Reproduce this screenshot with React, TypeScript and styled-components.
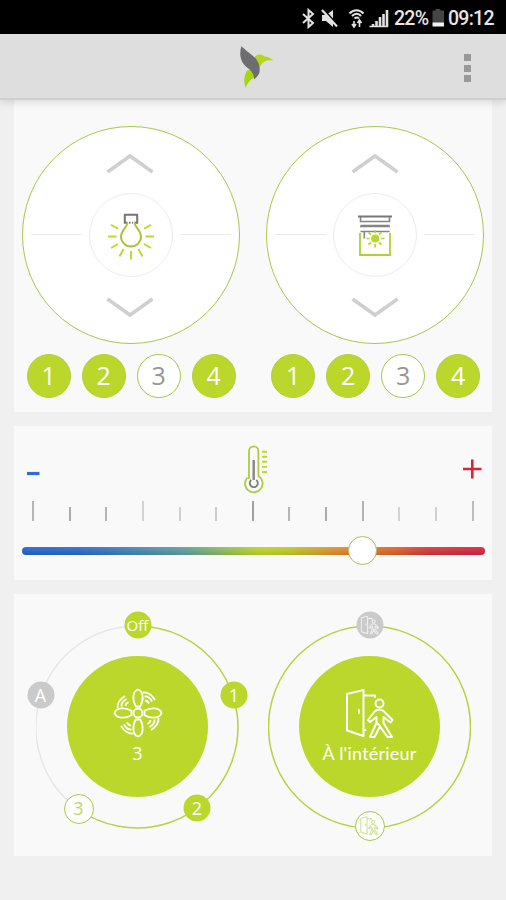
import React from "react";
import styled, { createGlobalStyle } from "styled-components";

const LIME = "#bcd72b";
const EDGE = "#a9c64c";

const GlobalStyle = createGlobalStyle`
  * { box-sizing: border-box; }
  body { margin: 0; background: #f0f0f0; font-family: "Open Sans", "Noto Sans", sans-serif; }
`;

const Screen = styled.div`
  width: 506px;
  height: 900px;
  background: #f0f0f0;
  overflow: hidden;
  display: flex;
  flex-direction: column;
`;

const StatusBar = styled.div`
  height: 34px;
  flex: none;
  background: #000;
  color: #e6e6e6;
  display: flex;
  align-items: center;
  justify-content: flex-end;
  padding: 3px 10px 0 0;
  svg { display: block; flex: none; }
`;

const StatusText = styled.span<{ $w: number }>`
  width: ${(p) => p.$w}px;
  font: 500 19.5px/34px Roboto, sans-serif;
  letter-spacing: -0.75px;
  white-space: nowrap;
`;

const AppBar = styled.header`
  height: 66px;
  flex: none;
  background: #dedede;
  border-bottom: 2px solid #d0d0d0;
  box-shadow: 0 2px 8px rgba(0, 0, 0, 0.14);
  position: relative;
  z-index: 1;
  display: grid;
  grid-template-columns: 1fr 66px 1fr;
  svg { display: block; }
`;

const Menu = styled.button`
  border: 0;
  padding: 20px 0 0;
  background: none;
  justify-self: end;
  margin-right: 35px;
  width: 7px;
  display: flex;
  flex-direction: column;
  gap: 3.5px;
  i { width: 7px; height: 7px; background: #999; flex: none; }
`;

const Content = styled.main`
  padding: 0 14px;
  display: flex;
  flex-direction: column;
`;

const Panel = styled.section<{ $h: number; $gap: number }>`
  height: ${(p) => p.$h}px;
  margin-bottom: ${(p) => p.$gap}px;
  background: #f9f9f9;
`;

const DialPanel = styled(Panel)`
  display: flex;
  gap: 26px;
  padding: 25.5px 7.5px 0;
`;

const DialColumn = styled.div`
  width: 218.5px;
`;

const Dial = styled.div`
  width: 218px;
  height: 218px;
  border: 1.5px solid ${EDGE};
  border-radius: 50%;
  background: #fff;
  display: grid;
  grid-template-columns: 51px 84px 51px;
  grid-template-rows: 84px;
  gap: 0 7px;
  place-content: center;
  align-items: center;
  position: relative;
`;

const Divider = styled.span`
  height: 1.5px;
  background: #ebebeb;
`;

const DialCore = styled.div`
  width: 84px;
  height: 84px;
  border: 1.5px solid #ececec;
  border-radius: 50%;
  display: grid;
  place-items: center;
  svg { display: block; }
`;

const Arrow = styled.svg<{ $down?: boolean }>`
  position: absolute;
  left: 83.5px;
  ${(p) => (p.$down ? "bottom: 24px; transform: scaleY(-1);" : "top: 25px;")}
`;

const Presets = styled.div`
  display: flex;
  gap: 11px;
  margin: 10.5px 0 0 5.2px;
`;

const Preset = styled.button<{ $open?: boolean }>`
  width: 44px;
  height: 44px;
  flex: none;
  padding: 0;
  border-radius: 50%;
  border: 1.5px solid ${(p) => (p.$open ? EDGE : "#b5ce3c")};
  background: ${(p) => (p.$open ? "#fff" : LIME)};
  color: ${(p) => (p.$open ? "#969696" : "#fff")};
  font: 400 25px/38px "Open Sans", sans-serif;
  padding-bottom: 2px;
`;

const TempPanel = styled(Panel)`
  padding: 18px 7.5px 0;
`;

const TempHead = styled.div`
  display: flex;
  justify-content: space-between;
  padding: 0 3px 0 4px;
  height: 57px;
  svg { display: block; }
`;

const Scale = styled.div`
  height: 20px;
  padding: 0 11px 0 10.5px;
  display: flex;
  justify-content: space-between;
  align-items: flex-end;
`;

const Tick = styled.i<{ $major: boolean; $tone: string }>`
  width: 2px;
  height: ${(p) => (p.$major ? 20 : 14)}px;
  background: ${(p) => p.$tone};
`;

const Track = styled.div`
  margin-top: 26px;
  height: 7.5px;
  border-radius: 4px;
  background: linear-gradient(180deg, rgba(255,255,255,.12), rgba(0,0,0,.07)),
    linear-gradient(90deg, #1f5fd0 0%, #2668c8 13%, #5b9c9c 35%, #b8d420 51%, #bccb24 57%, #dc8a28 68%, #dc6224 80%, #d33138 88%, #d5203c 100%);
  display: flex;
  align-items: center;
  padding-left: 326px;
`;

const Thumb = styled.span`
  width: 29px;
  height: 29px;
  flex: none;
  border: 1.6px solid ${EDGE};
  border-radius: 50%;
  background: #fff;
`;

const ModePanel = styled(Panel)`
  display: flex;
  gap: 29px;
  padding: 31px 0 0 22px;
`;

const Ring = styled.div`
  position: relative;
  width: 203px;
  height: 204px;
  display: grid;
  place-items: center;
`;

const RingLine = styled.svg`
  position: absolute;
  inset: 0;
`;

const Hub = styled.div`
  width: 141px;
  height: 141px;
  border-radius: 50%;
  background: ${LIME};
  color: #fff;
  position: relative;
  display: flex;
  flex-direction: column;
  align-items: center;
  padding-top: 32px;
  svg { display: block; flex: none; }
`;

const HubLabel = styled.span<{ $spread?: boolean }>`
  font: 400 18px/22px ${(p) => (p.$spread ? "Lato" : '"Open Sans"')}, sans-serif;
  letter-spacing: ${(p) => (p.$spread ? "0.2px" : "0")};
  margin-top: 4px;
  white-space: nowrap;
`;

const Node = styled.button<{ $x: number; $y: number; $kind: "on" | "off" | "open"; $fs?: number }>`
  position: absolute;
  left: ${(p) => p.$x}px;
  top: ${(p) => p.$y}px;
  transform: translate(-50%, -50%);
  width: ${(p) => (p.$kind === "open" ? 30 : 27)}px;
  height: ${(p) => (p.$kind === "open" ? 30 : 27)}px;
  padding: 0;
  border-radius: 50%;
  border: ${(p) => (p.$kind === "open" ? `1.5px solid ${EDGE}` : "0")};
  background: ${(p) => ({ on: LIME, off: "#cacaca", open: "#fff" })[p.$kind]};
  color: ${(p) => (p.$kind === "open" ? "#bfd46a" : "#fff")};
  font: 400 ${(p) => p.$fs ?? 18}px/25px "Open Sans", sans-serif;
  display: grid;
  place-items: center;
  svg { display: block; }
`;

const StatusIcons = () => (
  <svg width="92" height="22" viewBox="0 0 92 22" fill="none" stroke="#e2e2e2">
    <path d="M1 6l10 9-4.500 4V2l4.500 4L1 15" strokeWidth="2" />
    <path d="M20 7h4l7-5v17l-7-6h-4z" fill="#e2e2e2" stroke="none" />
    <path d="M20 0l16 18" stroke="#000" strokeWidth="2.500" />
    <path d="M20 2l15 16.500" strokeWidth="2.200" />
    <path d="M47.500 5.500c4-4.500 10-4.500 14 0M50 8c3-3 6.500-3 9 0M52.500 10.500c1.500-1.400 3-1.400 4.500 0" strokeWidth="2" />
    <path d="M52 19v-6M50 16l2 3 2-3M57.500 12v7M55.500 15l2-3 2 3" strokeWidth="1.600" />
    <path d="M71 19v-3M74.500 19v-6M78 19v-10M81.500 19V6M85 19V2" strokeWidth="2.600" />
    <path d="M67.500 18.500H86" strokeWidth="1.500" />
  </svg>
);

const Battery = () => (
  <svg width="17" height="20" viewBox="0 0 17 20">
    <path d="M4.500 0h5v2h-5z" fill="#454545" />
    <path d="M1.500 1.500h11.500V14H1.500z" fill="#454545" />
    <path d="M1.500 13.500h11.500v4H1.500z" fill="#f2f2f2" />
  </svg>
);

const Bird = () => (
  <svg width="66" height="64" viewBox="-2 -2 66 64">
    <path d="M31 23C34 18.500 38 17 42.500 20.500C46 20.500 49 22.500 51.500 24.500C45 23.500 41 25 38.500 30C36 32 33.500 28 31 23Z" fill="#b5d51b" />
    <path d="M25 34.500C31 32.500 36 34.500 35.500 39C31 42 26 45 23.500 52C21.500 46 22 40 25 34.500Z" fill="#a7d40d" />
    <path d="M19.500 10C25 17 36 20 37.500 31C38.500 37 36.500 40 32 43.500C32 37 29 34.500 24.500 31C18 26 17 17 19.500 10Z" fill="#6d6c71" />
  </svg>
);

const BulbIcon = () => (
  <svg width="50" height="50" viewBox="0 0 50 50" fill="none">
    <path d="M21.500 12.800h-2.700V4.800h12.400v8h-2.700M23 12.800h1.500M26 12.800h1" stroke="#77736f" strokeWidth="2" />
    <path d="M21.500 12.500C21 18 15 20 15 26.500a10 10 0 0 0 20 0C35 20 29 18 28.500 12.500" stroke="#a5c532" strokeWidth="1.900" />
    <path d="M5 14.800l7 4M45 14.800l-7 4M2 26.500h8.500M48 26.500h-8.500M5 38l7-4M45 38l-7-4M13.500 46.500l4-7.500M36.500 46.500l-4-7.500M25 49.500v-8.500" stroke="#b7da2b" strokeWidth="1.900" />
  </svg>
);

const BlindIcon = () => (
  <svg width="38" height="46" viewBox="0 0 38 46" fill="none" >
    <path d="M2 4.500h34" stroke="#77777b" strokeWidth="2.200" />
    <path d="M4.500 5v4.500h29V5M4.500 13.500h29M4 14.500h30M4.500 19.500h29M8.300 19.500v7" stroke="#858488" strokeWidth="1.600" />
    <path d="M4 21v22h30V21" stroke="#b0d034" strokeWidth="1.800" />
    <circle cx="19.200" cy="26.500" r="4" fill="#b5d82b" />
    <path d="M19.200 18v3M19.200 32v3.500M10.500 26.500h3M25 26.500h3.500M12.500 20.500l2.500 2M25.500 20.500l-2.500 2M12.500 32.500l2.500-2M25.500 32.500l-2.500-2" stroke="#b5d82b" strokeWidth="1.700" />
  </svg>
);

const Thermometer = () => (
  <svg width="31" height="51" viewBox="-6 0 31 51" fill="none">
    <path d="M5 35V7a4.700 4.700 0 0 1 9.400 0V32a8.800 8.800 0 1 1-11 1.500" stroke="#aecb43" strokeWidth="1.800" />
    <path d="M9.700 16v20" stroke="#8b8b8b" strokeWidth="2.500" />
    <path d="M7.300 36a4 4 0 1 0 5 0" stroke="#7d7d7d" strokeWidth="1.800" />
    <path d="M18 7.700h5M18 12.700h5M18 17.800h5M18 22.900h5M18 28h5" stroke="#b8da2d" strokeWidth="1.900" />
  </svg>
);

const FanIcon = () => (
  <svg width="50" height="50" viewBox="-25 -25 50 50" fill="none" stroke="#fff" strokeWidth="1.800">
    <circle r="4.500" />
    {[0, 90, 180, 270].map((a) => (
      <g key={a} transform={`rotate(${a})`}>
        <path d="M-2.200-6.500C-6-13-5.500-22 0-23.500C5.500-22 6-13 2.200-6.500Z" />
        <path d="M5-20.500Q12-21 17-13M6.500-16.500Q11-17 14-11.500M7-12.500Q9.500-12.500 11-9.500" />
      </g>
    ))}
  </svg>
);

const DoorIcon = ({ size = 50, tone = "#fff", weight = 2 }: { size?: number; tone?: string; weight?: number }) => (
  <svg width={size} height={size} viewBox="0 0 50 50" fill="none" stroke={tone} strokeWidth={weight} strokeLinejoin="round" strokeLinecap="round">
    <path d="M2 6L18.500 2v46L2 42.500zM18.500 7.500H30v1.500M18.500 42h2M14 22v3" />
    <circle cx="34.500" cy="15.500" r="4" />
    <path d="M30 23C33 21.500 36 21.500 38.500 23L47.500 32l-2 2.500-7-5.500v6L47 49h-4.500L35 38.500 29.500 49H25l6.500-14v-6l-6.500 5-2-2z" />
    <path d="M35 38l-3-3" />
  </svg>
);

const DialControl = ({ icon }: { icon: React.ReactNode }) => (
  <DialColumn>
    <Dial>
      <Arrow width="48" height="22" viewBox="0 0 48 22" fill="none">
        <path d="M1.500 20L24 4l22.500 16" stroke="#cfcfcf" strokeWidth="3.500" />
      </Arrow>
      <Divider />
      <DialCore>{icon}</DialCore>
      <Divider />
      <Arrow $down width="48" height="22" viewBox="0 0 48 22" fill="none">
        <path d="M1.500 20L24 4l22.500 16" stroke="#cfcfcf" strokeWidth="3.500" />
      </Arrow>
    </Dial>
    <Presets>
      {[1, 2, 3, 4].map((n) => (
        <Preset key={n} $open={n === 3}>{n}</Preset>
      ))}
    </Presets>
  </DialColumn>
);

const TICK_TONES = ["#b5b5b5", "#aaa", "#b4b4b4", "#d2d2d2", "#d0d0d0", "#cbcbcb", "#a2a2a2", "#b5b5b5", "#aaa", "#b2b2b2", "#d3d3d3", "#d0d0d0", "#bdbdbd"];

export default function App() {
  return (
    <>
      <GlobalStyle />
      <Screen>
        <StatusBar>
          <StatusIcons />
          <StatusText $w={37}>22%</StatusText>
          <Battery />
          <StatusText $w={48}>09:12</StatusText>
        </StatusBar>
        <AppBar>
          <span />
          <Bird />
          <Menu aria-label="Menu"><i /><i /><i /></Menu>
        </AppBar>
        <Content>
          <DialPanel $h={312} $gap={14}>
            <DialControl icon={<BulbIcon />} />
            <DialControl icon={<BlindIcon />} />
          </DialPanel>
          <TempPanel $h={154} $gap={13.5}>
            <TempHead>
              <svg width="25" height="51" viewBox="0 0 25 51"><path d="M1 29.500h12.500" stroke="#2c6fce" strokeWidth="3.200" /></svg>
              <Thermometer />
              <svg width="25" height="51" viewBox="0 0 25 51"><path d="M6 25h18.500M15.300 15.500v19" stroke="#d9253a" strokeWidth="2.600" /></svg>
            </TempHead>
            <Scale>
              {TICK_TONES.map((tone, i) => (
                <Tick key={i} $major={i % 3 === 0} $tone={tone} />
              ))}
            </Scale>
            <Track><Thumb /></Track>
          </TempPanel>
          <ModePanel $h={262.5} $gap={0}>
            <Ring>
              <RingLine width="203" height="204" viewBox="0 0 203 204" fill="none" strokeWidth="1.5">
                <path d="M102 1A101 101 0 0 0 42 184" stroke="#e6e6e6" />
                <path d="M102 1A101 101 0 1 1 42 184" stroke="#b7d245" />
              </RingLine>
              <Hub>
                <FanIcon />
                <HubLabel>3</HubLabel>
              </Hub>
              <Node $kind="on" $x={101.5} $y={0.5} $fs={15}>Off</Node>
              <Node $kind="on" $x={198} $y={70.5}>1</Node>
              <Node $kind="on" $x={161} $y={183.5}>2</Node>
              <Node $kind="open" $x={42.5} $y={184}>3</Node>
              <Node $kind="off" $x={4.500} $y={70.5}>A</Node>
            </Ring>
            <Ring>
              <RingLine width="203" height="204" viewBox="0 0 203 204" fill="none">
                <circle cx="101.500" cy="102" r="101" stroke="#b7d245" strokeWidth="1.5" />
              </RingLine>
              <Hub>
                <DoorIcon />
                <HubLabel $spread>À l'intérieur</HubLabel>
              </Hub>
              <Node $kind="off" $x={101.5} $y={0.5}><DoorIcon size={19} tone="#ededed" weight={3} /></Node>
              <Node $kind="open" $x={101.5} $y={201}><DoorIcon size={19} tone="#d3e199" weight={3} /></Node>
            </Ring>
          </ModePanel>
        </Content>
      </Screen>
    </>
  );
}
